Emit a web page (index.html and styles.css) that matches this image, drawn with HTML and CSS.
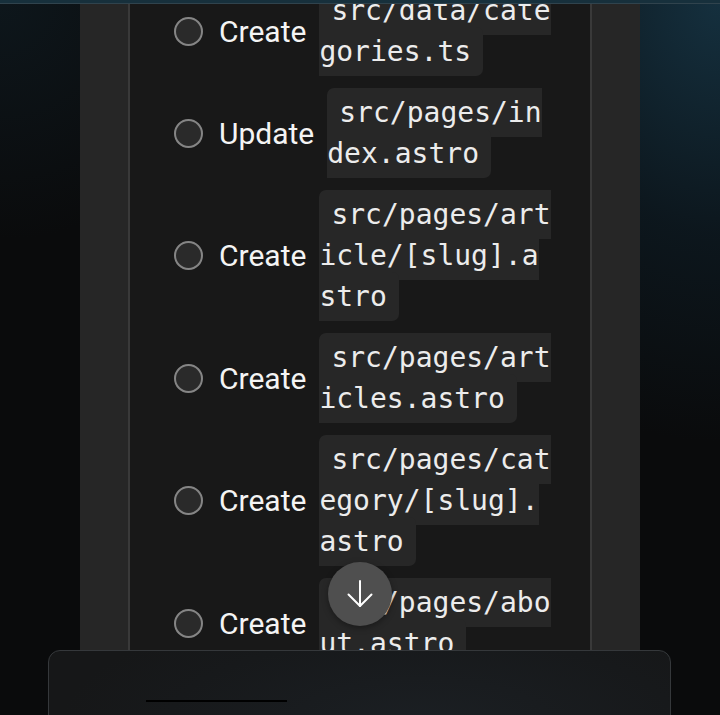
FILE: index.html
```html
<!DOCTYPE html>
<html lang="en">
<head>
<meta charset="utf-8">
<title>Steps</title>
<link rel="stylesheet" href="styles.css">
</head>
<body>
  <div class="topbar"></div>
  <div class="stage">
    <div class="column">
      <div class="panel">
        <ul class="steps">
          <li class="step">
            <span class="check"></span>
            <span class="label">Create</span>
            <span class="cell"><code class="path">src/data/categories.ts</code></span>
          </li>
          <li class="step">
            <span class="check"></span>
            <span class="label">Update</span>
            <span class="cell"><code class="path">src/pages/index.astro</code></span>
          </li>
          <li class="step">
            <span class="check"></span>
            <span class="label">Create</span>
            <span class="cell"><code class="path">src/pages/article/[slug].astro</code></span>
          </li>
          <li class="step">
            <span class="check"></span>
            <span class="label">Create</span>
            <span class="cell"><code class="path">src/pages/articles.astro</code></span>
          </li>
          <li class="step">
            <span class="check"></span>
            <span class="label">Create</span>
            <span class="cell"><code class="path">src/pages/category/[slug].astro</code></span>
          </li>
          <li class="step">
            <span class="check"></span>
            <span class="label">Create</span>
            <span class="cell"><code class="path">src/pages/about.astro</code></span>
          </li>
        </ul>
      </div>
    </div>
    <button class="scroll-down" aria-label="Scroll down">
      <svg width="28" height="30" viewBox="0 0 28 30" fill="none" stroke="#ffffff" stroke-width="2" stroke-linecap="round" stroke-linejoin="round">
        <path d="M14 2 V27"/>
        <path d="M2.5 15.5 L14 27 L25.5 15.5"/>
      </svg>
    </button>
  </div>
  <div class="composer">
    <div class="composer-bar"></div>
  </div>
</body>
</html>
```

FILE: styles.css
```css
* { box-sizing: border-box; }

html, body {
  margin: 0;
  padding: 0;
  height: 715px;
  overflow: hidden;
}

body {
  background:
    radial-gradient(ellipse 420px 520px at 100% 0%, rgba(22, 52, 68, 0.9) 0%, rgba(14, 30, 40, 0.6) 45%, rgba(10, 12, 14, 0) 85%),
    radial-gradient(ellipse 300px 300px at 0% 0%, rgba(16, 30, 38, 0.6) 0%, rgba(10, 11, 12, 0) 80%),
    #0a0b0c;
  font-family: Roboto, "Liberation Sans", sans-serif;
  color: #f2f2f2;
}

.topbar {
  height: 4px;
  background: #17303c;
  border-bottom: 1px solid #30434d;
}

.stage {
  position: relative;
  height: 646px;
  overflow: hidden;
}

.column {
  margin-left: 80px;
  width: 560px;
  height: 100%;
  padding: 0 48px;
  background: #262626;
}

.panel {
  height: 100%;
  background: #181818;
  border-left: 2px solid #393939;
  border-right: 2px solid #393939;
  overflow: hidden;
}

.steps {
  list-style: none;
  margin: -14px 0 0 0;
  padding: 0 39px 0 44px;
  display: flex;
  flex-direction: column;
  gap: 20px;
}

.step {
  display: flex;
  align-items: center;
}

.check {
  flex: none;
  width: 29px;
  height: 29px;
  border-radius: 50%;
  border: 2px solid #858585;
  background: #2a2a2a;
  margin-right: 16px;
}

.label {
  flex: none;
  font-size: 30px;
  line-height: 41px;
  color: #f4f4f4;
  margin-right: 13px;
}

.cell {
  flex: 1;
  min-width: 0;
  font-family: "DejaVu Sans Mono", "Liberation Mono", monospace;
  font-size: 28px;
  line-height: 41px;
  word-break: break-all;
}

.path {
  font-family: inherit;
  font-size: inherit;
  background: #272727;
  color: #ececec;
  padding: 8px 12px;
  border-radius: 7px;
}

.scroll-down {
  position: absolute;
  left: 328px;
  top: 558px;
  width: 64px;
  height: 64px;
  border-radius: 50%;
  border: none;
  background: #4f4f4f;
  display: flex;
  align-items: center;
  justify-content: center;
  padding: 0;
  box-shadow: 0 2px 6px rgba(0, 0, 0, 0.35);
}

.composer {
  margin-left: 48px;
  width: 623px;
  height: 90px;
  border: 1px solid #35383b;
  border-radius: 12px 12px 0 0;
  background: radial-gradient(ellipse 360px 120px at 60% 80%, #1b1f23 0%, #17191b 70%, #161718 100%);
  padding: 49px 0 0 97px;
}

.composer-bar {
  width: 141px;
  height: 2px;
  background: #000000;
}
```
